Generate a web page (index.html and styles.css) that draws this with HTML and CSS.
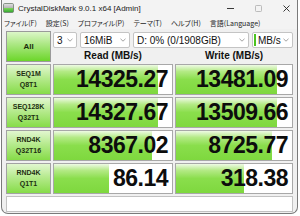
FILE: index.html
```html
<!DOCTYPE html>
<html lang="ja">
<head>
<meta charset="utf-8">
<title>CrystalDiskMark</title>
<link rel="stylesheet" href="styles.css">
</head>
<body>
<div class="window">
  <div class="titlebar">
    <svg class="appicon" viewBox="0 0 11 10" width="11" height="10">
      <defs>
        <linearGradient id="ig" x1="0" y1="0" x2="0" y2="1">
          <stop offset="0" stop-color="#e4e4e4"/>
          <stop offset="0.45" stop-color="#b8b8b8"/>
          <stop offset="0.5" stop-color="#7fd85a"/>
          <stop offset="1" stop-color="#2fa52f"/>
        </linearGradient>
      </defs>
      <rect x="0.5" y="0.5" width="10" height="9" rx="1.2" fill="url(#ig)" stroke="#6f7f6f" stroke-width="0.8"/>
    </svg>
    <span class="title">CrystalDiskMark 9.0.1 x64 [Admin]</span>
    <div class="controls">
      <svg class="ctl" viewBox="0 0 7 7" width="7" height="7"><line x1="0" y1="3.5" x2="7" y2="3.5" stroke="#222" stroke-width="0.9"/></svg>
      <svg class="ctl" viewBox="0 0 7 7" width="7" height="7"><rect x="0.5" y="0.5" width="6" height="6" rx="0.8" fill="none" stroke="#b4b4b4" stroke-width="0.9"/></svg>
      <svg class="ctl" viewBox="0 0 7 7" width="7" height="7"><path d="M0.5 0.5 L6.5 6.5 M6.5 0.5 L0.5 6.5" stroke="#222" stroke-width="0.9"/></svg>
    </div>
  </div>
  <div class="menubar">
    <span class="menu">ファイル(F)</span>
    <span class="menu">設定(S)</span>
    <span class="menu">プロファイル(P)</span>
    <span class="menu">テーマ(T)</span>
    <span class="menu">ヘルプ(H)</span>
    <span class="menu">言語(Language)</span>
  </div>
  <div class="content">
    <div class="grid">
      <div class="btn-all">All</div>
      <div class="selects">
        <div class="select s-count"><span>3</span><svg class="chev" viewBox="0 0 6 4" width="6" height="4"><polyline points="0.5,0.8 3,3.2 5.5,0.8" fill="none" stroke="#8a8a8a" stroke-width="0.8"/></svg></div>
        <div class="select s-size"><span>16MiB</span><svg class="chev" viewBox="0 0 6 4" width="6" height="4"><polyline points="0.5,0.8 3,3.2 5.5,0.8" fill="none" stroke="#8a8a8a" stroke-width="0.8"/></svg></div>
        <div class="select s-drive"><span>D: 0% (0/1908GiB)</span><svg class="chev" viewBox="0 0 6 4" width="6" height="4"><polyline points="0.5,0.8 3,3.2 5.5,0.8" fill="none" stroke="#8a8a8a" stroke-width="0.8"/></svg></div>
        <div class="select s-unit"><i class="unit-mark"></i><span>MB/s</span><svg class="chev" viewBox="0 0 6 4" width="6" height="4"><polyline points="0.5,0.8 3,3.2 5.5,0.8" fill="none" stroke="#8a8a8a" stroke-width="0.8"/></svg></div>
      </div>
      <div class="hdr">Read (MB/s)</div>
      <div class="hdr">Write (MB/s)</div>

      <div class="label"><span>SEQ1M</span><span>Q8T1</span></div>
      <div class="cell"><div class="bar" style="width:88%"></div><span class="val">14325.27</span></div>
      <div class="cell"><div class="bar" style="width:87%"></div><span class="val">13481.09</span></div>

      <div class="label"><span>SEQ128K</span><span>Q32T1</span></div>
      <div class="cell"><div class="bar" style="width:88%"></div><span class="val">14327.67</span></div>
      <div class="cell"><div class="bar" style="width:87%"></div><span class="val">13509.66</span></div>

      <div class="label"><span>RND4K</span><span>Q32T16</span></div>
      <div class="cell"><div class="bar" style="width:83%"></div><span class="val">8367.02</span></div>
      <div class="cell"><div class="bar" style="width:83%"></div><span class="val">8725.77</span></div>

      <div class="label"><span>RND4K</span><span>Q1T1</span></div>
      <div class="cell"><div class="bar" style="width:47%"></div><span class="val">86.14</span></div>
      <div class="cell"><div class="bar" style="width:59%"></div><span class="val">318.38</span></div>

      <div class="comment"></div>
    </div>
  </div>
</div>
</body>
</html>
```
FILE: styles.css
```css
* { box-sizing: border-box; margin: 0; padding: 0; }
html, body { width: 300px; height: 216px; overflow: hidden; background: #ffffff; }
body { font-family: "Liberation Sans", "Noto Sans CJK JP", sans-serif; color: #1a1a1a; }

.window {
  margin-left: 1px;
  width: 297px;
  height: 214px;
  background: #f0f0f0;
  border: 1px solid #7a7a7a;
  border-top: none;
  border-radius: 0 0 7px 7px;
  display: flex;
  flex-direction: column;
  overflow: hidden;
}

.titlebar {
  height: 16px;
  display: flex;
  align-items: center;
  padding-left: 1px;
  background: #f3f3f3;
}
.appicon { display: block; margin-right: 4px; }
.title { font-size: 8px; color: #1b1b1b; white-space: nowrap; }
.controls { margin-left: auto; display: flex; align-items: center; gap: 21px; padding-right: 7px; }
.ctl { display: block; }

.menubar {
  height: 13px;
  display: flex;
  align-items: center;
  gap: 9px;
  padding-left: 2px;
  background: #f3f3f3;
}
.menu {
  font-family: "Noto Sans CJK JP", sans-serif;
  font-feature-settings: "palt";
  font-size: 7px;
  color: #1e1e1e;
  white-space: nowrap;
}

.content { padding: 2px 0 0 4px; }

.grid {
  display: grid;
  grid-template-columns: 45px 120px 118px;
  grid-template-rows: 17px 12px repeat(4, 31px) 16px;
  column-gap: 2px;
  row-gap: 2px;
}

.btn-all {
  grid-row: 1 / span 2;
  grid-column: 1;
  border: 1px solid #9a9a9a;
  background: linear-gradient(#dcf6c8 0%, #aee887 40%, #6cd62a 100%);
  display: flex;
  align-items: center;
  justify-content: center;
  font-size: 8px;
  font-weight: bold;
  color: #1b2c0c;
}

.selects {
  grid-row: 1;
  grid-column: 2 / span 2;
  display: flex;
  gap: 3px;
  align-items: flex-end;
}
.select {
  height: 16px;
  background: #ffffff;
  border: 1px solid #c4c4c4;
  border-radius: 2px;
  display: flex;
  align-items: center;
  padding-left: 3px;
  padding-right: 3px;
  font-size: 10px;
  color: #111;
  white-space: nowrap;
}
.select .chev { display: block; margin-left: auto; }
.s-count { width: 24px; }
.s-size { width: 50px; }
.s-drive { width: 116px; }
.s-unit { width: 41px; padding-left: 1px; }
.unit-mark { display: block; width: 2px; height: 12px; background: #4cc320; margin-right: 2px; }

.hdr {
  grid-row: 2;
  font-size: 10px;
  font-weight: bold;
  color: #111;
  text-align: center;
  line-height: 12px;
}

.label {
  border: 1px solid #a2a2a2;
  background: linear-gradient(#e2f7d0 0%, #b6ea8e 45%, #86dc48 100%);
  display: flex;
  flex-direction: column;
  align-items: center;
  justify-content: center;
  gap: 3px;
  font-size: 7px;
  font-weight: bold;
  color: #1c2e10;
  line-height: 8px;
}

.cell {
  position: relative;
  border: 1px solid #a8a8a8;
  background: #ffffff;
  display: flex;
  align-items: center;
  justify-content: flex-end;
  padding-right: 4px;
}
.bar {
  position: absolute;
  left: 0;
  top: 0;
  bottom: 0;
  background: linear-gradient(#eefae4 0%, #b4ea86 22%, #8ade4c 50%, #7ed83e 100%);
}
.val {
  position: relative;
  font-size: 23px;
  font-weight: bold;
  color: #0d0d0d;
  letter-spacing: -0.5px;
  line-height: 1;
}

.comment {
  grid-column: 1 / span 3;
  background: #ffffff;
  border: 1px solid #c2c2c2;
}
```
